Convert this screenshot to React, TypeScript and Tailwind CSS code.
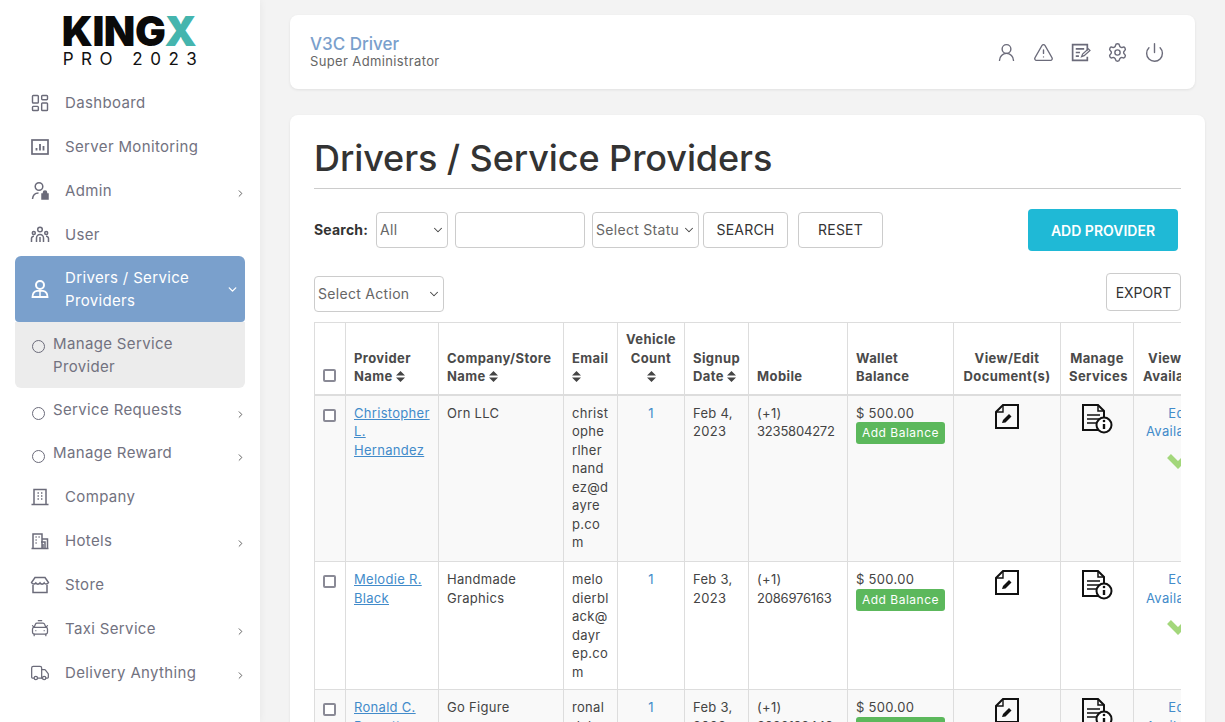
import { ChevronDown, ChevronRight, CarTaxiFront, LayoutDashboard, Power, Settings, Truck, TriangleAlert, UserRound } from 'lucide-react'
import type { ReactNode } from 'react'

const FONT = "font-['Inter','Liberation_Sans',sans-serif]"

function IconBox({ children }: { children: ReactNode }) {
  return (
    <svg width="20" height="20" viewBox="0 0 20 20" fill="none" stroke="currentColor" strokeWidth="1.5" className="shrink-0">
      {children}
    </svg>
  )
}

const MonitorIcon = () => (
  <IconBox>
    <rect x="2" y="3" width="16" height="14" strokeWidth="1.7" />
    <path d="M6.500 13.500v-2.500M10 13.500V7M13.500 13.500V9" strokeWidth="1.800" />
  </IconBox>
)
const AdminIcon = () => (
  <IconBox>
    <circle cx="9" cy="5.500" r="3.800" />
    <path d="M2.500 18c.4-4 3-6 6-6" />
    <path d="M12 13h6v5h-6zM13.500 13v-1.500a1.500 1.500 0 0 1 3 0V13" fill="currentColor" />
  </IconBox>
)
const UserIcon = () => (
  <IconBox>
    <circle cx="10" cy="4.500" r="2.300" />
    <circle cx="3.800" cy="8" r="1.500" />
    <circle cx="16.200" cy="8" r="1.500" />
    <path d="M6.500 17v-4a3.500 3.500 0 0 1 7 0v4M1.500 17v-3.500a2.200 2.200 0 0 1 2.500-2.200M18.500 17v-3.500a2.200 2.200 0 0 0-2.500-2.200M10 12v5" />
  </IconBox>
)
const DriverIcon = () => (
  <IconBox>
    <circle cx="10" cy="6" r="4" strokeWidth="2" />
    <path d="M2.500 18c0-3.600 2.300-5.800 4.500-6.200h6c2.200.4 4.500 2.600 4.500 6.200z" strokeWidth="1.800" />
    <path d="M10 12v6" />
  </IconBox>
)
const CompanyIcon = () => (
  <IconBox>
    <path d="M4 17.500V2.500h12v15M1.500 17.500h17" />
    <path d="M7.500 6h1.400M11 6h1.400M7.500 9h1.400M11 9h1.400M7.500 12h1.400M11 12h1.400" />
  </IconBox>
)
const HotelIcon = () => (
  <IconBox>
    <path d="M3 17V3h9v14M12 8h5.500v9M1.500 17.500h17" />
    <path d="M5.500 6h1.200M8.500 6h1.200M5.500 9h1.200M5.500 12h1.200M11 11h4v6M13 13v4" />
  </IconBox>
)
const StoreIcon = () => (
  <IconBox>
    <path d="M5 2.500h10l3.500 5c-1 2-3.500 2-4.300.5-1 1.500-3.300 1.500-4.200 0-1 1.500-3.200 1.500-4.200 0-1 1.500-3.300 1.500-4.300-.5z" />
    <path d="M3 10v7.500h14V10" />
  </IconBox>
)

// note with a pen, header bar
const NoteIcon = () => (
  <svg width="21" height="21" viewBox="0 0 20 20" fill="none" stroke="currentColor" strokeWidth="1.600">
    <path d="M16.500 8V2.500h-14v15h14V14" />
    <path d="M5.500 6.500h8M5.500 10h4M5.500 13.500h3" />
    <path d="M11 14l1-2.500 5.500-5 1.500 1.500-5.500 5z" strokeWidth="1.200" />
  </svg>
)

const DocEditIcon = () => (
  <svg width="26" height="28" viewBox="0 0 26 28" fill="none" stroke="#111" strokeWidth="2">
    <path d="M9 2h15v23H2V9z" />
    <path d="M9 2v7H2" strokeWidth="1.400" />
    <path d="M8 20l1-3 6-6 2.500 2.500-6 6z" fill="#111" stroke="none" />
  </svg>
)

const DocInfoIcon = () => (
  <svg width="32" height="31" viewBox="0 0 32 31" fill="none" stroke="#111" strokeWidth="2">
    <path d="M19 27H2V2h15l6 6v6" />
    <path d="M17 2v6h6" strokeWidth="1.500" />
    <path d="M6 12h13M6 16h13M6 20h10" strokeWidth="1.500" />
    <circle cx="23" cy="22" r="7.500" fill="#fff" />
    <path d="M23 21v5" strokeWidth="2.400" />
    <circle cx="23" cy="18" r="1.300" fill="#111" stroke="none" />
  </svg>
)

function NavItem({ icon, label, arrow }: { icon: ReactNode; label: string; arrow?: boolean }) {
  return (
    <div className="flex h-[44px] items-center pl-[30px] pr-[15px] text-[15px] tracking-[0.35px] text-[#72727f]">
      <span className="w-[35px] text-[#6b6b7a]">{icon}</span>
      <span className="flex-1">{label}</span>
      {arrow && <ChevronRight size={11} strokeWidth={2} className="mt-[4px] mr-[-1px] text-[#555]" />}
    </div>
  )
}

function SubItem({ label }: { label: string }) {
  return (
    <div className="flex h-[43px] items-center pl-[32px] pr-[15px] text-[15px] tracking-[0.35px] text-[#72727f]">
      <span className="mt-[6px] mr-[8px] h-[13px] w-[13px] rounded-full border-[1.5px] border-[#6b6b7a]" />
      <span className="flex-1">{label}</span>
      <ChevronRight size={11} strokeWidth={2} className="mt-[8px] mr-[-1px] text-[#555]" />
    </div>
  )
}

function Sidebar() {
  return (
    <aside className="flex h-full w-[260px] shrink-0 flex-col bg-white shadow-[0_0_8px_rgba(0,0,0,0.06)]">
      <div className="flex h-[81px] flex-col items-center pt-[13px] pr-[2px]">
        <div className="text-[41px] leading-[36px] font-black tracking-[-0.5px] text-[#0a0a0a]">
          KING<span className="text-[#45b5ae]">X</span>
        </div>
        <div className="pl-[9px] text-[17px] leading-[20px] tracking-[7.5px] whitespace-pre text-[#111]">PRO 2023</div>
      </div>
      <NavItem icon={<LayoutDashboard size={20} strokeWidth={1.7} />} label="Dashboard" />
      <NavItem icon={<MonitorIcon />} label="Server Monitoring" />
      <NavItem icon={<AdminIcon />} label="Admin" arrow />
      <NavItem icon={<UserIcon />} label="User" />
      <div className="mx-[15px] mt-[-1px] flex h-[66px] items-center rounded-t-[6px] rounded-b-[4px] bg-[#7aa0cc] pl-[15px] pr-[6px] text-[15px] leading-[23px] tracking-[0.35px] text-white">
        <span className="w-[35px]">
          <DriverIcon />
        </span>
        <span className="flex-1">
          Drivers / Service
          <br />
          Providers
        </span>
        <ChevronDown size={13} strokeWidth={2.5} />
      </div>
      <div className="mx-[15px] flex h-[66px] items-center rounded-b-[6px] bg-[#ececec] pl-[17px] text-[15px] leading-[23px] tracking-[0.35px] text-[#72727f]">
        <span className="mr-[8px] mt-[4px] h-[13px] w-[13px] self-start translate-y-[14px] rounded-full border-[1.5px] border-[#6b6b7a]" />
        <span>
          Manage Service
          <br />
          Provider
        </span>
      </div>
      <div className="h-[1px]" />
      <SubItem label="Service Requests" />
      <SubItem label="Manage Reward" />
      <NavItem icon={<CompanyIcon />} label="Company" />
      <NavItem icon={<HotelIcon />} label="Hotels" arrow />
      <NavItem icon={<StoreIcon />} label="Store" />
      <NavItem icon={<CarTaxiFront size={20} strokeWidth={1.5} />} label="Taxi Service" arrow />
      <NavItem icon={<Truck size={20} strokeWidth={1.5} />} label="Delivery Anything" arrow />
    </aside>
  )
}

function SortIcon() {
  return (
    <svg width="9" height="11" viewBox="0 0 9 11" className="inline-block align-[-1px]" fill="#444">
      <path d="M4.500 0L9 4.500H0zM4.500 11L0 6.500h9z" />
    </svg>
  )
}

const TH = 'border border-[#ddd] border-b-2 px-[8px] pb-[8px] pt-[5px] align-bottom text-[13px] leading-[18.500px] font-bold tracking-[0.4px] text-[#4a4a4a]'
const TD = 'border border-[#ddd] px-[8px] pt-[8px] pb-[8px] align-top text-[13px] leading-[18.570px] tracking-[0.3px]'

const Checkbox = ({ className }: { className: string }) => (
  <input type="checkbox" className={`block h-[13px] w-[13px] appearance-none rounded-[2px] border-2 border-[#8a8a96] bg-white ${className}`} />
)

function SelectBox({ label, width }: { label: string; width: string }) {
  return (
    <div className={`relative ${width}`}>
      <select className="h-[36px] w-full appearance-none rounded-[4px] border border-[#ccc] bg-white pb-[2px] pl-[3px] pr-[19px] text-[14px] tracking-[0.3px] text-[#666]">
        <option>{label}</option>
      </select>
      <ChevronDown size={14} strokeWidth={1.8} className="pointer-events-none absolute top-[11px] right-[3px] text-[#444]" />
    </div>
  )
}

interface Row {
  first: string[]
  company: string[]
  email: string[]
  date: string[]
  phone: string
  height: string
  bg: string
}

const rows: Row[] = [
  {
    first: ['Christopher', 'L.', 'Hernandez'],
    company: ['Orn LLC'],
    email: ['christ', 'ophe', 'rlher', 'nand', 'ez@d', 'ayre', 'p.co', 'm'],
    date: ['Feb 4,', '2023'],
    phone: '3235804272',
    height: 'h-[167px]',
    bg: 'bg-[#f9f9f9]',
  },
  {
    first: ['Melodie R.', 'Black'],
    company: ['Handmade', 'Graphics'],
    email: ['melo', 'dierbl', 'ack@', 'dayr', 'ep.co', 'm'],
    date: ['Feb 3,', '2023'],
    phone: '2086976163',
    height: 'h-[128px]',
    bg: 'bg-white',
  },
  {
    first: ['Ronald C.', 'Barnett'],
    company: ['Go Figure'],
    email: ['ronal', 'dcbar'],
    date: ['Feb 3,', '2023'],
    phone: '3026192449',
    height: 'h-[128px]',
    bg: 'bg-[#f9f9f9]',
  },
]

function Lines({ items }: { items: string[] }) {
  return (
    <>
      {items.map((s) => (
        <span key={s} className="block whitespace-nowrap">
          {s}
        </span>
      ))}
    </>
  )
}

function ProvidersTable() {
  return (
    <div className="mt-[10px] w-[867px] overflow-hidden">
      <table className="w-[913px] table-fixed border-collapse">
        <colgroup>
          <col className="w-[31px]" />
          <col className="w-[93px]" />
          <col className="w-[125px]" />
          <col className="w-[54px]" />
          <col className="w-[67px]" />
          <col className="w-[64px]" />
          <col className="w-[99px]" />
          <col className="w-[106px]" />
          <col className="w-[107px]" />
          <col className="w-[73px]" />
          <col className="w-[94px]" />
        </colgroup>
        <thead>
          <tr className="h-[72px]">
            <th className={TH}>
              <Checkbox className="mb-[4px]" />
            </th>
            <th className={`${TH} text-left`}>
              Provider
              <br />
              Name <SortIcon />
            </th>
            <th className={`${TH} text-left whitespace-nowrap`}>
              Company/Store
              <br />
              Name <SortIcon />
            </th>
            <th className={`${TH} text-left`}>
              Email
              <br />
              <SortIcon />
            </th>
            <th className={`${TH} text-center`}>
              Vehicle
              <br />
              Count
              <br />
              <SortIcon />
            </th>
            <th className={`${TH} text-left`}>
              Signup
              <br />
              Date <SortIcon />
            </th>
            <th className={`${TH} text-left`}>Mobile</th>
            <th className={`${TH} text-left`}>
              Wallet
              <br />
              Balance
            </th>
            <th className={`${TH} text-center whitespace-nowrap`}>
              View/Edit
              <br />
              Document(s)
            </th>
            <th className={`${TH} text-center whitespace-nowrap`}>
              Manage
              <br />
              Services
            </th>
            <th className={`${TH} text-center whitespace-nowrap`}>
              View/Edit
              <br />
              Availability
            </th>
          </tr>
        </thead>
        <tbody>
          {rows.map((r) => (
            <tr key={r.phone} className={`${r.height} ${r.bg} text-[#444]`}>
              <td className={TD}>
                <Checkbox className="mt-[5px]" />
              </td>
              <td className={TD}>
                {r.first.map((n) => (
                  <a key={n} href="#" className="block whitespace-nowrap text-[#428bca] underline">
                    {n}
                  </a>
                ))}
              </td>
              <td className={TD}>
                <Lines items={r.company} />
              </td>
              <td className={TD}>
                <Lines items={r.email} />
              </td>
              <td className={`${TD} text-center text-[#428bca]`}>1</td>
              <td className={TD}>
                <Lines items={r.date} />
              </td>
              <td className={TD}>
                (+1)
                <br />
                <span className="tracking-[-0.2px]">{r.phone}</span>
              </td>
              <td className={TD}>
                $ 500.00
                <button className="block h-[22px] w-[89px] rounded-[3px] bg-[#5cb85c] text-[12px] leading-[22px] tracking-[0.5px] text-white">Add Balance</button>
              </td>
              <td className={TD}>
                <span className="-mt-[1px] flex justify-center">
                  <DocEditIcon />
                </span>
              </td>
              <td className={TD}>
                <span className="-mt-[1px] flex justify-center">
                  <DocInfoIcon />
                </span>
              </td>
              <td className={`${TD} text-center text-[#428bca]`}>
                Edit
                <br />
                <span className="whitespace-nowrap">Availability</span>
                <svg width="30" height="22" viewBox="0 0 30 22" className="mx-auto mt-[7px]" fill="none" stroke="#a3d77b" strokeWidth="5.500">
                  <path d="M3 8l9 9L28 1" />
                </svg>
              </td>
            </tr>
          ))}
        </tbody>
      </table>
    </div>
  )
}

export default function App() {
  return (
    <div className={`flex h-[722px] w-full overflow-hidden bg-[#f3f3f3] ${FONT}`}>
      <Sidebar />
      <main className="min-w-0 flex-1 pt-[15px] pl-[30px] pr-[20px]">
        <header className="flex h-[74px] w-[905px] items-center justify-between rounded-[8px] bg-white pl-[20px] pr-[30px] shadow-[0_1px_3px_rgba(0,0,0,0.08)]">
          <div className="mt-[-4px]">
            <div className="text-[17px] leading-[22px] font-medium text-[#7aa0cc]">V3C Driver</div>
            <div className="mt-[-1px] text-[13px] leading-[14px] tracking-[0.37px] text-[#666]">Super Administrator</div>
          </div>
          <div className="flex items-center gap-[16px] text-[#6b6b7a]">
            <UserRound size={21} strokeWidth={1.6} />
            <TriangleAlert size={21} strokeWidth={1.6} />
            <NoteIcon />
            <Settings size={21} strokeWidth={1.6} />
            <Power size={21} strokeWidth={1.6} />
          </div>
        </header>
        <section className="mt-[26px] h-[700px] rounded-[8px] bg-white px-[24px] pt-[19px] shadow-[0_1px_3px_rgba(0,0,0,0.08)]">
          <h1 className="border-b border-[#ccc] pb-[6px] text-[36px] leading-[48px] font-medium tracking-[-0.08px] text-[#333]">Drivers / Service Providers</h1>
          <div className="mt-[20px] flex items-center justify-between pr-[3px]">
            <div className="flex items-center text-[14px] tracking-[0.2px] text-[#555]">
              <span className="w-[62px] pb-[2px] font-bold text-[#333]">Search:</span>
              <SelectBox label="All" width="w-[72px]" />
              <input className="ml-[7px] h-[36px] w-[130px] rounded-[4px] border border-[#ccc] bg-white" />
              <div className="ml-[7px]">
                <SelectBox label="Select Status" width="w-[107px]" />
              </div>
              <button className="ml-[4px] h-[36px] w-[85px] rounded-[4px] border border-[#ccc] bg-white pb-[2px] text-[#333]">SEARCH</button>
              <button className="ml-[10px] h-[36px] w-[85px] rounded-[4px] border border-[#ccc] bg-white pb-[2px] text-[#333]">RESET</button>
            </div>
            <button className="h-[42px] w-[150px] rounded-[4px] bg-[#1fb9d6] text-[14px] font-semibold text-white">ADD PROVIDER</button>
          </div>
          <div className="mt-[22px] flex items-start justify-between">
            <div className="mt-[3px]">
              <SelectBox label="Select Action" width="w-[130px]" />
            </div>
            <button className="h-[38px] w-[75px] rounded-[4px] border border-[#ccc] bg-white text-[14px] text-[#333]">EXPORT</button>
          </div>
          <ProvidersTable />
        </section>
      </main>
    </div>
  )
}
